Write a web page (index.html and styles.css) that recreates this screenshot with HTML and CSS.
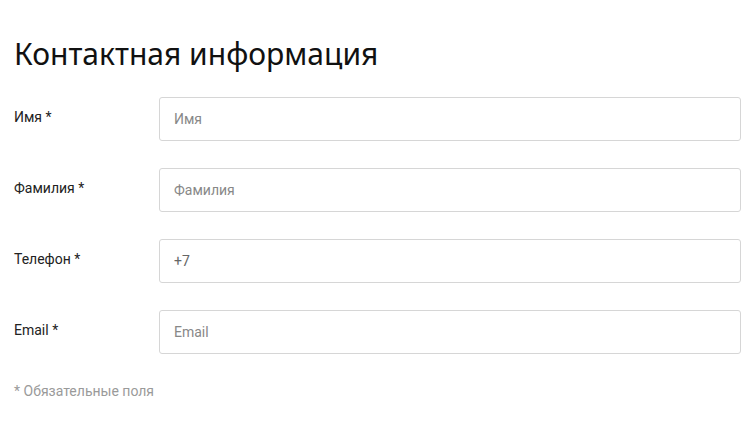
FILE: index.html
```html
<!DOCTYPE html>
<html lang="ru">

<head>
    <meta charset="UTF-8">
    <meta name="viewport" content="width=device-width, initial-scale=1.0">
    <title>Контактная информация</title>
    <link rel="stylesheet" href="styles.css">
</head>

<body>
    <form class="contact-form">
        <h2 class="form-title">Контактная информация</h2>

        <div class="form-row">
            <label for="firstName">Имя *</label>
            <input type="text" id="firstName" placeholder="Имя">
        </div>

        <div class="form-row">
            <label for="lastName">Фамилия *</label>
            <input type="text" id="lastName" placeholder="Фамилия">
        </div>

        <div class="form-row">
            <label for="phone">Телефон *</label>
            <input type="tel" id="phone" value="+7">
        </div>

        <div class="form-row">
            <label for="email">Email *</label>
            <input type="email" id="email" placeholder="Email">
        </div>

        <p class="form-note">* Обязательные поля</p>
    </form>
</body>

</html>
```

FILE: styles.css
```css
body {
    font-family: Roboto, "Liberation Sans", sans-serif;
    margin: 0;
    color: #222;
    background: #fff;
}

.contact-form {
    padding: 34px 11px 0 14px;
}

.form-title {
    font-family: "Noto Sans", sans-serif;
    font-weight: 400;
    font-size: 30px;
    line-height: 40px;
    margin: 0 0 23px;
    color: #111;
}

.form-row {
    display: grid;
    grid-template-columns: 145px 1fr;
    align-items: start;
    margin-bottom: 27px;
}

.form-row label {
    font-size: 14px;
    line-height: 20px;
    padding-top: 10px;
    color: #222;
}

.form-row input {
    box-sizing: border-box;
    height: 44px;
    padding: 0 14px;
    border: 1px solid #d6d6d6;
    border-radius: 3px;
    font-family: inherit;
    font-size: 14px;
    color: #666;
    outline: none;
}

.form-row input::placeholder {
    color: #888;
}

.form-note {
    margin: 0;
    padding-top: 2px;
    font-size: 14px;
    color: #9a9a9a;
}
```
